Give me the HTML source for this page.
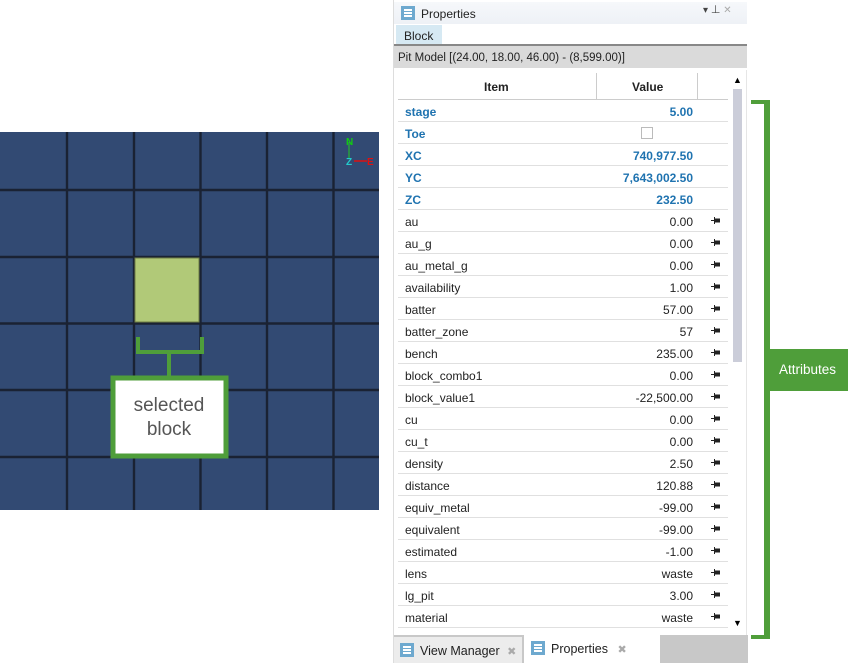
<!DOCTYPE html>
<html><head><meta charset="utf-8"><style>
*{margin:0;padding:0;box-sizing:border-box}
body{width:852px;height:663px;background:#fff;position:relative;overflow:hidden;font-family:"Liberation Sans",sans-serif}
.a{position:absolute}
.row{position:absolute;left:398px;width:330px;height:22px;border-bottom:1px solid #e0e0e0;font-size:12px;color:#222}
.row .n{position:absolute;left:7px;top:5px}
.row .v{position:absolute;right:35px;top:5px}
.row.b{color:#1f73b0;font-weight:bold}
.pin{position:absolute;left:313px;top:7px;width:9px;height:7px}
</style></head><body>
<div class="a" style="left:0;top:132px;width:379px;height:378px;background:#324a73"></div>
<svg class="a" style="left:0;top:132px" width="380" height="380">
<g stroke="#1a2233" stroke-width="2.4">
<line x1="67" y1="0" x2="67" y2="378"/><line x1="134" y1="0" x2="134" y2="378"/><line x1="200.5" y1="0" x2="200.5" y2="378"/><line x1="267" y1="0" x2="267" y2="378"/><line x1="333.5" y1="0" x2="333.5" y2="378"/>
<line x1="0" y1="58" x2="379" y2="58"/><line x1="0" y1="125" x2="379" y2="125"/><line x1="0" y1="191.5" x2="379" y2="191.5"/><line x1="0" y1="258" x2="379" y2="258"/><line x1="0" y1="325" x2="379" y2="325"/>
</g>
<rect x="135" y="126" width="64" height="64" fill="#b1c978" stroke="#6f7d45" stroke-width="1"/>
<line x1="349" y1="10" x2="349" y2="26" stroke="#2c2" stroke-width="1"/>
<line x1="354" y1="29" x2="367" y2="29" stroke="#d11" stroke-width="1.5"/>
<text x="346" y="13" font-size="10" font-weight="bold" fill="#1c1">N</text>
<text x="346" y="33" font-size="10" font-weight="bold" fill="#2cc">Z</text>
<text x="367" y="33" font-size="10" font-weight="bold" fill="#d11">E</text>
<path d="M138 205 V220 H202 V205" fill="none" stroke="#4f9e3a" stroke-width="4"/>
<line x1="169" y1="220" x2="169" y2="245" stroke="#4f9e3a" stroke-width="4"/>
<rect x="113" y="246" width="113" height="78" fill="#fff" stroke="#4f9e3a" stroke-width="5"/>
<text x="169" y="279" font-size="19" fill="#555" text-anchor="middle">selected</text>
<text x="169" y="303" font-size="19" fill="#555" text-anchor="middle">block</text>
</svg>
<div class="a" style="left:393px;top:0;width:355px;height:663px;background:#fff;border-left:1px solid #ddd"></div>
<div class="a" style="left:394px;top:2px;width:353px;height:22px;background:linear-gradient(#f6f8fb,#eef1f6)"></div>
<div class="a" style="left:401px;top:6px;width:14px;height:14px;background:#6ea9cf"></div>
<div class="a" style="left:404px;top:9px;width:8px;height:2px;background:#fff;box-shadow:0 3px 0 #fff,0 6px 0 #fff"></div>
<div class="a" style="left:421px;top:7px;font-size:12px;color:#222">Properties</div>
<div class="a" style="left:703px;top:3px;font-size:10px;color:#444">▾ <span style="font-size:11px">⊥</span> <span style="color:#aaa">✕</span></div>
<div class="a" style="left:396px;top:25px;width:46px;height:20px;background:#d6e9f3"></div>
<div class="a" style="left:404px;top:29px;font-size:12px;color:#222">Block</div>
<div class="a" style="left:394px;top:44px;width:353px;height:2px;background:#888"></div>
<div class="a" style="left:394px;top:46px;width:353px;height:22px;background:#dadada"></div>
<div class="a" style="left:398px;top:52px;font-size:11.5px;color:#222">Pit Model [(24.00, 18.00, 46.00) - (8,599.00)]</div>
<div class="a" style="left:398px;top:73px;width:330px;height:27px;border-bottom:1px solid #ccc"></div>
<div class="a" style="left:596px;top:73px;width:1px;height:27px;background:#ccc"></div>
<div class="a" style="left:697px;top:73px;width:1px;height:27px;background:#ccc"></div>
<div class="a" style="left:484px;top:80px;font-size:12px;font-weight:bold;color:#222">Item</div>
<div class="a" style="left:632px;top:80px;font-size:12px;font-weight:bold;color:#222">Value</div>
<div class="a" style="left:733px;top:75px;font-size:9px">▲</div>
<div class="a" style="left:733px;top:89px;width:9px;height:273px;background:#cbcdd9"></div>
<div class="a" style="left:733px;top:618px;font-size:9px">▼</div>
<div class="a" style="left:746px;top:70px;width:1px;height:566px;background:#e6e6e6"></div>
<div class="row b" style="top:100px"><span class="n">stage</span><span class="v">5.00</span></div>
<div class="row b" style="top:122px"><span class="n">Toe</span><span class="a" style="left:243px;top:5px;width:12px;height:12px;border:1px solid #bbb"></span></div>
<div class="row b" style="top:144px"><span class="n">XC</span><span class="v">740,977.50</span></div>
<div class="row b" style="top:166px"><span class="n">YC</span><span class="v">7,643,002.50</span></div>
<div class="row b" style="top:188px"><span class="n">ZC</span><span class="v">232.50</span></div>
<div class="row" style="top:210px"><span class="n">au</span><span class="v">0.00</span><svg class="pin" viewBox="0 0 9 7"><path d="M0 3.5H3M3.5 0V7" stroke="#222" fill="none"/><rect x="4" y="1.5" width="5" height="4" fill="#222"/></svg></div>
<div class="row" style="top:232px"><span class="n">au_g</span><span class="v">0.00</span><svg class="pin" viewBox="0 0 9 7"><path d="M0 3.5H3M3.5 0V7" stroke="#222" fill="none"/><rect x="4" y="1.5" width="5" height="4" fill="#222"/></svg></div>
<div class="row" style="top:254px"><span class="n">au_metal_g</span><span class="v">0.00</span><svg class="pin" viewBox="0 0 9 7"><path d="M0 3.5H3M3.5 0V7" stroke="#222" fill="none"/><rect x="4" y="1.5" width="5" height="4" fill="#222"/></svg></div>
<div class="row" style="top:276px"><span class="n">availability</span><span class="v">1.00</span><svg class="pin" viewBox="0 0 9 7"><path d="M0 3.5H3M3.5 0V7" stroke="#222" fill="none"/><rect x="4" y="1.5" width="5" height="4" fill="#222"/></svg></div>
<div class="row" style="top:298px"><span class="n">batter</span><span class="v">57.00</span><svg class="pin" viewBox="0 0 9 7"><path d="M0 3.5H3M3.5 0V7" stroke="#222" fill="none"/><rect x="4" y="1.5" width="5" height="4" fill="#222"/></svg></div>
<div class="row" style="top:320px"><span class="n">batter_zone</span><span class="v">57</span><svg class="pin" viewBox="0 0 9 7"><path d="M0 3.5H3M3.5 0V7" stroke="#222" fill="none"/><rect x="4" y="1.5" width="5" height="4" fill="#222"/></svg></div>
<div class="row" style="top:342px"><span class="n">bench</span><span class="v">235.00</span><svg class="pin" viewBox="0 0 9 7"><path d="M0 3.5H3M3.5 0V7" stroke="#222" fill="none"/><rect x="4" y="1.5" width="5" height="4" fill="#222"/></svg></div>
<div class="row" style="top:364px"><span class="n">block_combo1</span><span class="v">0.00</span><svg class="pin" viewBox="0 0 9 7"><path d="M0 3.5H3M3.5 0V7" stroke="#222" fill="none"/><rect x="4" y="1.5" width="5" height="4" fill="#222"/></svg></div>
<div class="row" style="top:386px"><span class="n">block_value1</span><span class="v">-22,500.00</span><svg class="pin" viewBox="0 0 9 7"><path d="M0 3.5H3M3.5 0V7" stroke="#222" fill="none"/><rect x="4" y="1.5" width="5" height="4" fill="#222"/></svg></div>
<div class="row" style="top:408px"><span class="n">cu</span><span class="v">0.00</span><svg class="pin" viewBox="0 0 9 7"><path d="M0 3.5H3M3.5 0V7" stroke="#222" fill="none"/><rect x="4" y="1.5" width="5" height="4" fill="#222"/></svg></div>
<div class="row" style="top:430px"><span class="n">cu_t</span><span class="v">0.00</span><svg class="pin" viewBox="0 0 9 7"><path d="M0 3.5H3M3.5 0V7" stroke="#222" fill="none"/><rect x="4" y="1.5" width="5" height="4" fill="#222"/></svg></div>
<div class="row" style="top:452px"><span class="n">density</span><span class="v">2.50</span><svg class="pin" viewBox="0 0 9 7"><path d="M0 3.5H3M3.5 0V7" stroke="#222" fill="none"/><rect x="4" y="1.5" width="5" height="4" fill="#222"/></svg></div>
<div class="row" style="top:474px"><span class="n">distance</span><span class="v">120.88</span><svg class="pin" viewBox="0 0 9 7"><path d="M0 3.5H3M3.5 0V7" stroke="#222" fill="none"/><rect x="4" y="1.5" width="5" height="4" fill="#222"/></svg></div>
<div class="row" style="top:496px"><span class="n">equiv_metal</span><span class="v">-99.00</span><svg class="pin" viewBox="0 0 9 7"><path d="M0 3.5H3M3.5 0V7" stroke="#222" fill="none"/><rect x="4" y="1.5" width="5" height="4" fill="#222"/></svg></div>
<div class="row" style="top:518px"><span class="n">equivalent</span><span class="v">-99.00</span><svg class="pin" viewBox="0 0 9 7"><path d="M0 3.5H3M3.5 0V7" stroke="#222" fill="none"/><rect x="4" y="1.5" width="5" height="4" fill="#222"/></svg></div>
<div class="row" style="top:540px"><span class="n">estimated</span><span class="v">-1.00</span><svg class="pin" viewBox="0 0 9 7"><path d="M0 3.5H3M3.5 0V7" stroke="#222" fill="none"/><rect x="4" y="1.5" width="5" height="4" fill="#222"/></svg></div>
<div class="row" style="top:562px"><span class="n">lens</span><span class="v">waste</span><svg class="pin" viewBox="0 0 9 7"><path d="M0 3.5H3M3.5 0V7" stroke="#222" fill="none"/><rect x="4" y="1.5" width="5" height="4" fill="#222"/></svg></div>
<div class="row" style="top:584px"><span class="n">lg_pit</span><span class="v">3.00</span><svg class="pin" viewBox="0 0 9 7"><path d="M0 3.5H3M3.5 0V7" stroke="#222" fill="none"/><rect x="4" y="1.5" width="5" height="4" fill="#222"/></svg></div>
<div class="row" style="top:606px"><span class="n">material</span><span class="v">waste</span><svg class="pin" viewBox="0 0 9 7"><path d="M0 3.5H3M3.5 0V7" stroke="#222" fill="none"/><rect x="4" y="1.5" width="5" height="4" fill="#222"/></svg></div>
<div class="a" style="left:394px;top:635px;width:354px;height:28px;background:#c8c8c8"></div>
<div class="a" style="left:394px;top:637px;width:128px;height:26px;background:#ececec"></div>
<div class="a" style="left:524px;top:635px;width:136px;height:28px;background:#fff"></div>
<div class="a" style="left:400px;top:643px;width:14px;height:14px;background:#6ea9cf"></div>
<div class="a" style="left:403px;top:646px;width:8px;height:2px;background:#fff;box-shadow:0 3px 0 #fff,0 6px 0 #fff"></div>
<div class="a" style="left:420px;top:644px;font-size:12.5px;color:#222">View Manager <span style="color:#aaa;font-size:11px;margin-left:4px">✖</span></div>
<div class="a" style="left:531px;top:641px;width:14px;height:14px;background:#6ea9cf"></div>
<div class="a" style="left:534px;top:644px;width:8px;height:2px;background:#fff;box-shadow:0 3px 0 #fff,0 6px 0 #fff"></div>
<div class="a" style="left:551px;top:642px;font-size:12.5px;color:#222">Properties <span style="color:#aaa;font-size:11px;margin-left:6px">✖</span></div>
<div class="a" style="left:751px;top:100px;width:19px;height:4px;background:#4f9e3a"></div>
<div class="a" style="left:764px;top:100px;width:6px;height:539px;background:#4f9e3a"></div>
<div class="a" style="left:751px;top:635px;width:19px;height:4px;background:#4f9e3a"></div>
<div class="a" style="left:767px;top:349px;width:81px;height:42px;background:#4f9e3a;color:#fff;font-size:13.5px;text-align:center;line-height:42px">Attributes</div>
</body></html>
